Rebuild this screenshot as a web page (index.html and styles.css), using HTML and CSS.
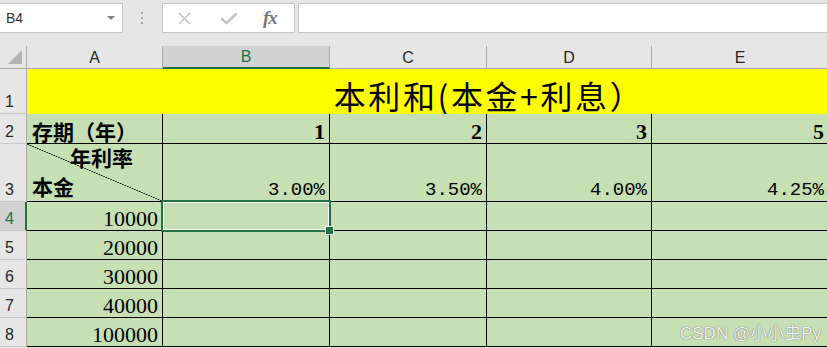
FILE: index.html
```html
<!DOCTYPE html>
<html lang="zh-CN">
<head>
    <meta charset="UTF-8">
    <title>本利和</title>
    <link rel="stylesheet" href="styles.css">
</head>
<body>
    <!-- formula bar -->
    <div class="toolbar">
        <div class="namebox"><span>B4</span><span class="caret"></span></div>
        <div class="grip">
            <svg width="3" height="12" viewBox="0 0 3 12"><rect x="0" y="0" width="2" height="2" fill="#a6a6a6"/><rect x="0" y="5" width="2" height="2" fill="#a6a6a6"/><rect x="0" y="10" width="2" height="2" fill="#a6a6a6"/></svg>
        </div>
        <div class="fxbox">
            <svg class="ico-x" width="13" height="13" viewBox="0 0 13 13"><path d="M1 1L12 12M12 1L1 12" stroke="#c4c4c4" stroke-width="1.6" fill="none"/></svg>
            <svg class="ico-ok" width="18" height="13" viewBox="0 0 18 13"><path d="M1.5 6.5L6.5 11L16.5 1.5" stroke="#c4c4c4" stroke-width="2.6" fill="none"/></svg>
            <span class="fx">fx</span>
        </div>
        <div class="formula"></div>
    </div>

    <!-- sheet -->
    <div class="sheet">
        <div class="corner"><span class="tri"></span></div>
        <div class="ch">A</div>
        <div class="ch on">B</div>
        <div class="ch">C</div>
        <div class="ch">D</div>
        <div class="ch">E</div>

        <div class="rh">1</div>
        <div class="title">本利和(本金+利息）</div>

        <div class="rh">2</div>
        <div class="c label">存期（年）</div>
        <div class="c num bold">1</div>
        <div class="c num bold">2</div>
        <div class="c num bold">3</div>
        <div class="c num bold">5</div>

        <div class="rh">3</div>
        <div class="c corner-cell">
            <span class="rate">年利率</span>
            <span>本金</span>
        </div>
        <div class="c num pct">3.00%</div>
        <div class="c num pct">3.50%</div>
        <div class="c num pct">4.00%</div>
        <div class="c num pct">4.25%</div>

        <div class="rh on">4</div>
        <div class="c num">10000</div>
        <div class="c sel"></div>
        <div class="c"></div>
        <div class="c"></div>
        <div class="c"></div>

        <div class="rh">5</div>
        <div class="c num">20000</div>
        <div class="c"></div>
        <div class="c"></div>
        <div class="c"></div>
        <div class="c"></div>

        <div class="rh">6</div>
        <div class="c num">30000</div>
        <div class="c"></div>
        <div class="c"></div>
        <div class="c"></div>
        <div class="c"></div>

        <div class="rh">7</div>
        <div class="c num">40000</div>
        <div class="c"></div>
        <div class="c"></div>
        <div class="c"></div>
        <div class="c"></div>

        <div class="rh">8</div>
        <div class="c num">100000</div>
        <div class="c"></div>
        <div class="c"></div>
        <div class="c"></div>
        <div class="c"></div>
    </div>

    <div class="watermark">CSDN @小小虫Py</div>
</body>
</html>
```

FILE: styles.css
```css
* { box-sizing: border-box; }
body { margin: 0; width: 827px; height: 348px; overflow: hidden; position: relative; background: #e6e6e6; font-family: "Liberation Sans", "Noto Sans CJK SC", sans-serif; color: #222; }

/* formula bar */
.toolbar { display: flex; height: 46px; padding-top: 3px; }
.namebox { width: 123px; height: 30px; background: #fff; border: 1px solid #c6c6c6; border-left: none; display: flex; align-items: center; justify-content: space-between; padding: 0 7px 0 6px; font-size: 14px; color: #333; }
.caret { width: 0; height: 0; border-left: 4px solid transparent; border-right: 4px solid transparent; border-top: 4px solid #808080; }
.grip { width: 39px; height: 30px; display: flex; align-items: center; justify-content: center; }
.fxbox { width: 133px; height: 30px; background: #fff; border: 1px solid #c6c6c6; display: flex; align-items: center; padding-left: 15px; }
.ico-ok { margin-left: 29px; }
.fx { margin-left: 25px; font-family: "Liberation Serif", serif; font-style: italic; font-weight: bold; font-size: 19px; color: #777; letter-spacing: -1px; }
.formula { flex: 1; height: 30px; margin-left: 3px; background: #fff; border: 1px solid #c6c6c6; border-right: none; }

/* grid */
.sheet { display: grid; grid-template-columns: 27px 136px 167px 157px 165px 177px; grid-template-rows: 23px 45px 30px 58px repeat(5, 29px); width: 829px; }
.corner { background: #e6e6e6; border-right: 1px solid #ababab; border-bottom: 1px solid #ababab; position: relative; }
.tri { position: absolute; right: 4px; bottom: 4px; width: 14px; height: 14px; background: #b4b4b4; clip-path: polygon(100% 0, 100% 100%, 0 100%); }
.ch { background: #e6e6e6; border-right: 1px solid #ababab; border-bottom: 1px solid #ababab; display: flex; align-items: center; justify-content: center; font-size: 16px; color: #262626; padding-top: 1px; }
.ch.on { background: #d2d2d2; color: #217346; border-bottom: 2px solid #217346; }
.rh { background: #e6e6e6; border-right: 1px solid #ababab; border-bottom: 1px solid #c8c8c8; display: flex; align-items: flex-end; padding: 0 0 2px 5px; font-size: 16px; color: #262626; }
.rh.on { background: #d2d2d2; color: #217346; border-right: 2px solid #217346; }

.title { grid-column: 2 / 7; background: #ffff00; display: flex; align-items: flex-end; justify-content: center; padding: 0 0 3px 122px; font-family: "Noto Sans CJK SC", sans-serif; font-size: 32px; letter-spacing: 2.6px; line-height: 1; color: #000; }

.c { background: #c6e0b4; border-right: 1px solid #000; border-bottom: 1px solid #000; display: flex; align-items: flex-end; padding: 0 4px 0 5px; color: #000; }
.num { justify-content: flex-end; font-family: "Liberation Serif", serif; font-size: 22px; line-height: 1; }
.bold { font-weight: bold; }
.pct { font-family: "Liberation Mono", monospace; font-size: 19px; padding-bottom: 1px; }
.label { font-family: "Noto Sans CJK SC", sans-serif; font-weight: bold; font-size: 21px; line-height: 1; padding-bottom: 1px; }
.corner-cell { flex-direction: column; align-items: flex-start; justify-content: flex-end; font-family: "Noto Sans CJK SC", sans-serif; font-weight: bold; font-size: 21px; line-height: 29px; padding-bottom: 0; background: #c6e0b4 linear-gradient(to top right, transparent calc(50% - 0.6px), #000 50%, transparent calc(50% + 0.6px)); }
.rate { padding-left: 38px; }

/* selected cell B4 */
.sel { position: relative; }
.sel::after { content: ""; position: absolute; top: -2px; left: -2px; right: -2px; bottom: -2px; border: 2px solid #217346; box-shadow: inset 0 0 0 1px #fff; }
.sel::before { content: ""; position: absolute; right: -5px; bottom: -5px; width: 7px; height: 7px; background: #217346; border: 1px solid #fff; z-index: 1; }

.watermark { position: absolute; left: 680px; top: 319px; font-size: 17px; color: #f2f2f2; text-shadow: 0 0 1px #777, 0 0 1px #777; }
```
